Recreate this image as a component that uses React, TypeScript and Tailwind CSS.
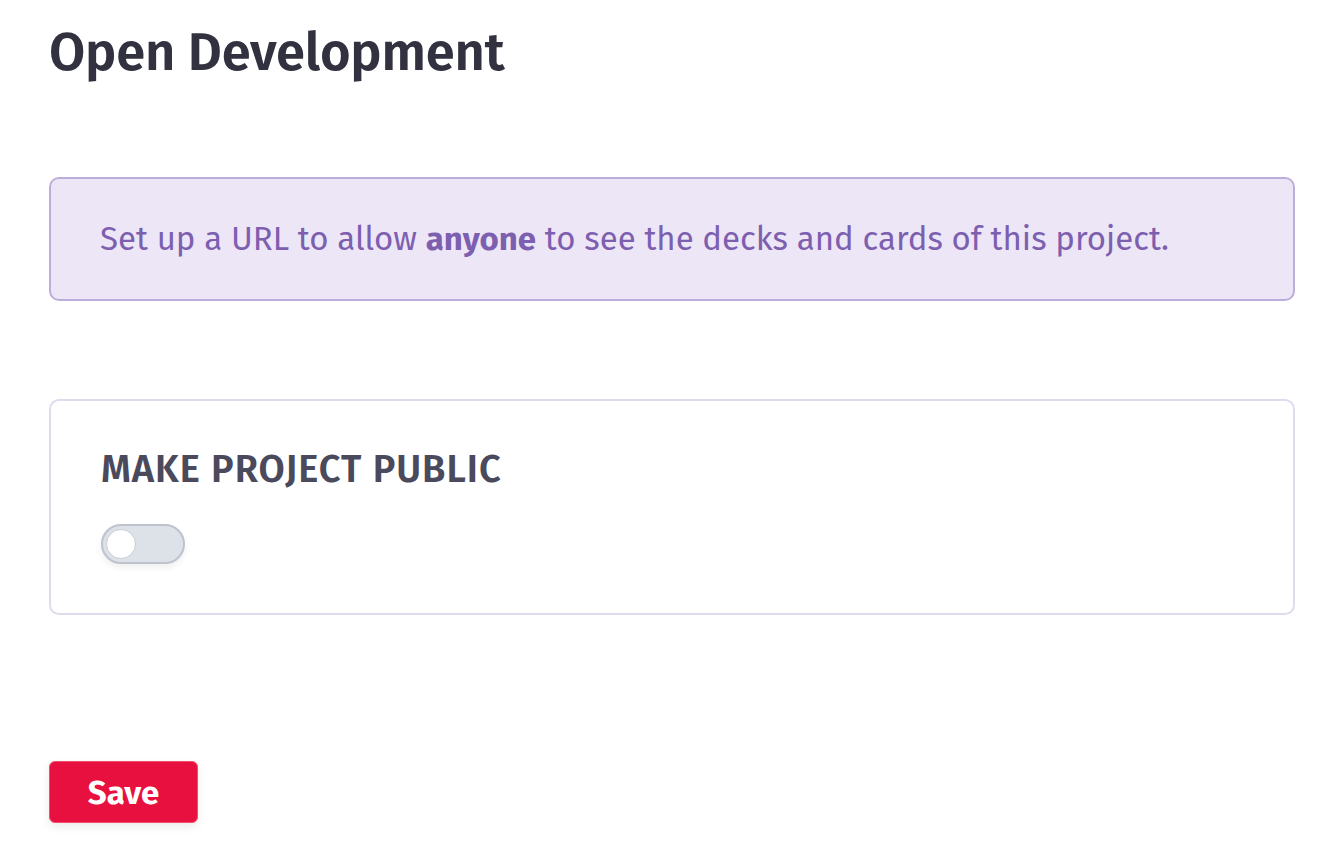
import React from "react";

export default function App() {
  return (
    <div
      className="min-h-[848px] w-[1340px] bg-white pl-[49px] pr-[45px] pt-[23px]"
      style={{ fontFamily: '"Fira Sans", "Open Sans", "Noto Sans", sans-serif' }}
    >
      <h1 className="text-[52.5px] font-semibold leading-[60px] text-[#31313f] tracking-[-0.2px]">
        Open Development
      </h1>

      <div className="mt-[94px] flex h-[124px] items-center rounded-[10px] border-2 border-[#bcaedb] bg-[#ede6f7] pl-[49px]">
        <p className="text-[33px] leading-[40px] text-[#7d5fb0]">
          Set up a URL to allow <span className="font-bold">anyone</span> to see the decks and cards of this project.
        </p>
      </div>

      <div className="mt-[98px] h-[216px] rounded-[10px] border-2 border-[#dddbee] bg-white pl-[50px] pt-[48px]">
        <h2 className="text-[38px] font-semibold uppercase leading-[40px] tracking-[1px] text-[#4a4a5c]">
          Make project public
        </h2>
        <div className="mt-[35px] flex h-[40px] w-[84px] items-center rounded-full border-2 border-[#bfc3cd] bg-[#dde1e8] pl-[3px] shadow-[0_4px_6px_rgba(0,0,0,0.06)]">
          <div className="h-[30px] w-[30px] rounded-full border border-[#c8ccd4] bg-white" />
        </div>
      </div>

      <button className="mt-[146px] flex h-[62px] w-[149px] items-center justify-center rounded-[6px] border border-[#f0506e] bg-[#e8103e] pt-[4px] text-[33px] font-bold text-white shadow-[0_4px_10px_rgba(0,0,0,0.08)]">
        Save
      </button>
    </div>
  );
}
